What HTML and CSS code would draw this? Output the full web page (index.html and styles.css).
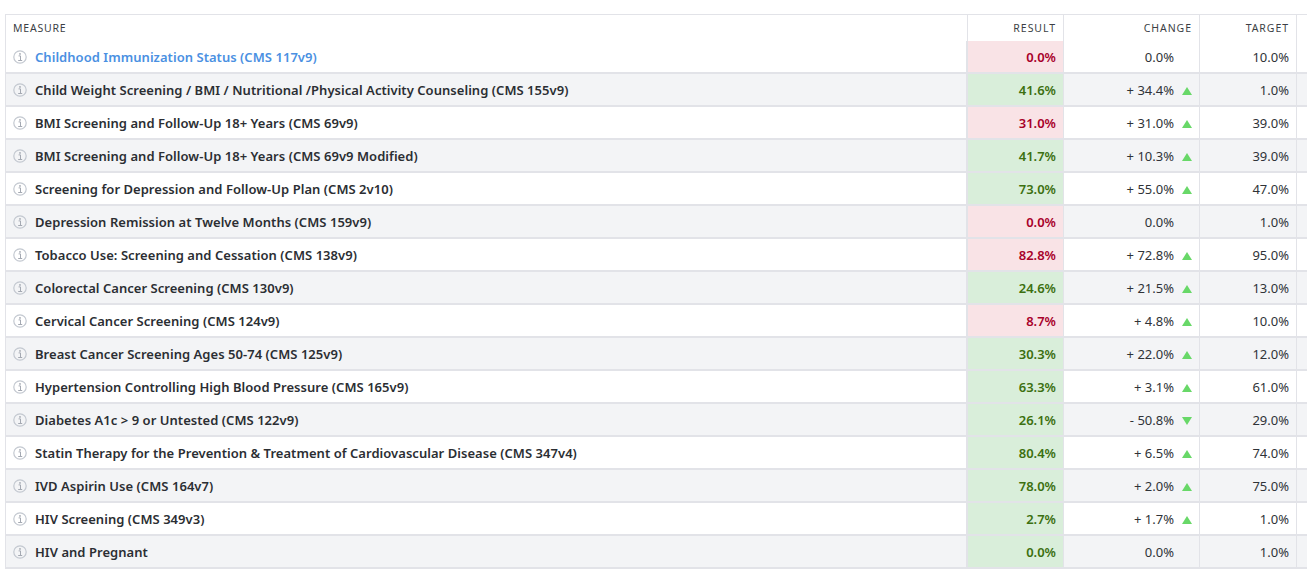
FILE: index.html
```html
<!DOCTYPE html>
<html lang="en">
<head>
<meta charset="utf-8">
<title>Measures</title>
<link rel="stylesheet" href="styles.css">
</head>
<body>
<svg class="defs" width="0" height="0" aria-hidden="true">
<symbol id="info" viewBox="0 0 14 14"><circle cx="7" cy="7" r="6.2" fill="none" stroke="#c3c8d0" stroke-width="1.2"/><path d="M5.6 5.9h1.9v4.4M5.2 10.5h4" fill="none" stroke="#a4a9b2" stroke-width="1"/><circle cx="7" cy="3.9" r=".9" fill="#a4a9b2"/></symbol>
</svg>
<table class="measures">
<colgroup><col class="c-measure"><col class="c-result"><col class="c-change"><col class="c-target"><col class="c-rest"></colgroup>
<thead><tr><th class="measure-h">MEASURE</th><th>RESULT</th><th class="change-h">CHANGE</th><th>TARGET</th><th class="rest"></th></tr></thead>
<tbody>
<tr><td class="name link"><svg class="info"><use href="#info"/></svg>Childhood Immunization Status (CMS 117v9)</td><td class="res bad">0.0%</td><td class="chg"><span class="val">0.0%</span><i class="tri"></i></td><td class="tgt">10.0%</td><td class="rest"></td></tr>
<tr><td class="name"><svg class="info"><use href="#info"/></svg>Child Weight Screening / BMI / Nutritional /Physical Activity Counseling (CMS 155v9)</td><td class="res good">41.6%</td><td class="chg"><span class="val">+ 34.4%</span><i class="tri up"></i></td><td class="tgt">1.0%</td><td class="rest"></td></tr>
<tr><td class="name"><svg class="info"><use href="#info"/></svg>BMI Screening and Follow-Up 18+ Years (CMS 69v9)</td><td class="res bad">31.0%</td><td class="chg"><span class="val">+ 31.0%</span><i class="tri up"></i></td><td class="tgt">39.0%</td><td class="rest"></td></tr>
<tr><td class="name"><svg class="info"><use href="#info"/></svg>BMI Screening and Follow-Up 18+ Years (CMS 69v9 Modified)</td><td class="res good">41.7%</td><td class="chg"><span class="val">+ 10.3%</span><i class="tri up"></i></td><td class="tgt">39.0%</td><td class="rest"></td></tr>
<tr><td class="name"><svg class="info"><use href="#info"/></svg>Screening for Depression and Follow-Up Plan (CMS 2v10)</td><td class="res good">73.0%</td><td class="chg"><span class="val">+ 55.0%</span><i class="tri up"></i></td><td class="tgt">47.0%</td><td class="rest"></td></tr>
<tr><td class="name"><svg class="info"><use href="#info"/></svg>Depression Remission at Twelve Months (CMS 159v9)</td><td class="res bad">0.0%</td><td class="chg"><span class="val">0.0%</span><i class="tri"></i></td><td class="tgt">1.0%</td><td class="rest"></td></tr>
<tr><td class="name"><svg class="info"><use href="#info"/></svg>Tobacco Use: Screening and Cessation (CMS 138v9)</td><td class="res bad">82.8%</td><td class="chg"><span class="val">+ 72.8%</span><i class="tri up"></i></td><td class="tgt">95.0%</td><td class="rest"></td></tr>
<tr><td class="name"><svg class="info"><use href="#info"/></svg>Colorectal Cancer Screening (CMS 130v9)</td><td class="res good">24.6%</td><td class="chg"><span class="val">+ 21.5%</span><i class="tri up"></i></td><td class="tgt">13.0%</td><td class="rest"></td></tr>
<tr><td class="name"><svg class="info"><use href="#info"/></svg>Cervical Cancer Screening (CMS 124v9)</td><td class="res bad">8.7%</td><td class="chg"><span class="val">+ 4.8%</span><i class="tri up"></i></td><td class="tgt">10.0%</td><td class="rest"></td></tr>
<tr><td class="name"><svg class="info"><use href="#info"/></svg>Breast Cancer Screening Ages 50-74 (CMS 125v9)</td><td class="res good">30.3%</td><td class="chg"><span class="val">+ 22.0%</span><i class="tri up"></i></td><td class="tgt">12.0%</td><td class="rest"></td></tr>
<tr><td class="name"><svg class="info"><use href="#info"/></svg>Hypertension Controlling High Blood Pressure (CMS 165v9)</td><td class="res good">63.3%</td><td class="chg"><span class="val">+ 3.1%</span><i class="tri up"></i></td><td class="tgt">61.0%</td><td class="rest"></td></tr>
<tr><td class="name"><svg class="info"><use href="#info"/></svg>Diabetes A1c &gt; 9 or Untested (CMS 122v9)</td><td class="res good">26.1%</td><td class="chg"><span class="val">- 50.8%</span><i class="tri down"></i></td><td class="tgt">29.0%</td><td class="rest"></td></tr>
<tr><td class="name"><svg class="info"><use href="#info"/></svg>Statin Therapy for the Prevention &amp; Treatment of Cardiovascular Disease (CMS 347v4)</td><td class="res good">80.4%</td><td class="chg"><span class="val">+ 6.5%</span><i class="tri up"></i></td><td class="tgt">74.0%</td><td class="rest"></td></tr>
<tr><td class="name"><svg class="info"><use href="#info"/></svg>IVD Aspirin Use (CMS 164v7)</td><td class="res good">78.0%</td><td class="chg"><span class="val">+ 2.0%</span><i class="tri up"></i></td><td class="tgt">75.0%</td><td class="rest"></td></tr>
<tr><td class="name"><svg class="info"><use href="#info"/></svg>HIV Screening (CMS 349v3)</td><td class="res good">2.7%</td><td class="chg"><span class="val">+ 1.7%</span><i class="tri up"></i></td><td class="tgt">1.0%</td><td class="rest"></td></tr>
<tr><td class="name"><svg class="info"><use href="#info"/></svg>HIV and Pregnant</td><td class="res good">0.0%</td><td class="chg"><span class="val">0.0%</span><i class="tri"></i></td><td class="tgt">1.0%</td><td class="rest"></td></tr>
</tbody>
</table>
</body>
</html>
```
FILE: styles.css
```css
html, body { margin: 0; background: #fff; overflow: hidden; }
body { padding: 14px 0 0 5px; font-family: "Noto Sans", sans-serif; font-size: 13px; color: #2f3338; }
.defs { position: absolute; }
.measures { border-collapse: separate; border-spacing: 0; table-layout: fixed; width: 1303px; border-top: 1px solid #e2e3e8; }
.c-measure { width: 963px; }
.c-result { width: 96px; }
.c-change { width: 136px; }
.c-target { width: 97px; }
.c-rest { width: 11px; }
th { height: 26px; padding: 0 7px 0 0; font-size: 10.5px; font-weight: 400; letter-spacing: .95px; text-align: right; color: #3c3f45; border-right: 1px solid #e2e3e8; box-sizing: border-box; }
th.measure-h { text-align: left; padding-left: 7px; letter-spacing: .8px; border-left: 1px solid #e2e3e8; }
th.rest, td.rest { border-right: 0; }
td { height: 33px; padding: 0 7px 0 0; box-sizing: border-box; border-bottom: 2px solid #e2e3e8; border-right: 1px solid #e2e3e8; text-align: right; white-space: nowrap; }
tbody tr:nth-child(even) td { background: #f3f4f6; }
td.name { text-align: left; font-weight: 600; letter-spacing: .04px; padding-left: 7px; border-left: 1px solid #e2e3e8; border-right: 2px solid #e2e3e8; color: #2b2e33; }
td.link { color: #4a90e2; }
.info { width: 14px; height: 14px; vertical-align: -2px; margin-right: 8px; }
tbody tr td.res { font-weight: 600; }
tbody tr td.bad { background: #f9e3e6; color: #a8002a; }
tbody tr td.good { background: #d9eeda; color: #3c7010; }
.tri { display: inline-block; width: 10px; margin-left: 8px; height: 8px; }
.tri.up { width: 0; height: 0; border: 5px solid transparent; border-top: 0; border-bottom: 8px solid #68d868; }
.tri.down { width: 0; height: 0; border: 5px solid transparent; border-bottom: 0; border-top: 8px solid #68d868; }
```
